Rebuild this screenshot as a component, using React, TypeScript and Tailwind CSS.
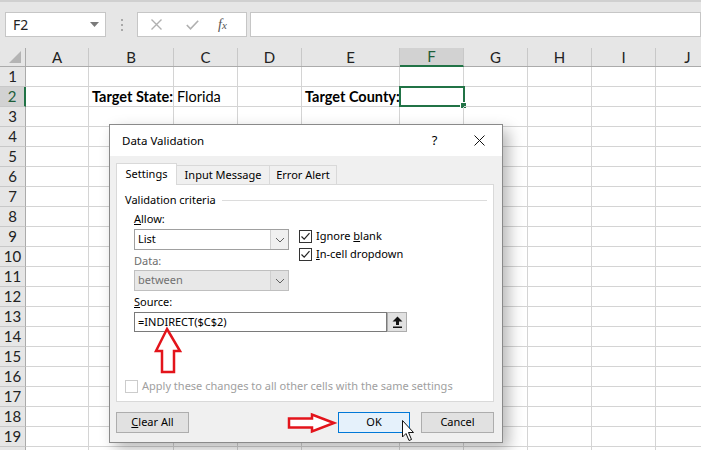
import React from "react";

const COLS = [
  { name: "A", w: 63 },
  { name: "B", w: 85 },
  { name: "C", w: 64 },
  { name: "D", w: 64 },
  { name: "E", w: 98 },
  { name: "F", w: 64 },
  { name: "G", w: 64 },
  { name: "H", w: 64 },
  { name: "I", w: 64 },
  { name: "J", w: 64 },
];

const ROWS = Array.from({ length: 20 }, (_, i) => i + 1);

const cellText: Record<string, { text: string; bold?: boolean }> = {
  "B2": { text: "Target State:", bold: true },
  "C2": { text: "Florida" },
  "E2": { text: "Target County:", bold: true },
};

const Chevron = () => (
  <svg width="10" height="6" viewBox="0 0 10 6">
    <path d="M1 1 L5 5 L9 1" fill="none" stroke="#606060" strokeWidth="1" />
  </svg>
);

const Check = ({ checked, disabled }: { checked?: boolean; disabled?: boolean }) => (
  <div
    className={`w-[13px] h-[13px] border bg-white flex items-center justify-center ${
      disabled ? "border-[#cccccc]" : "border-[#333333]"
    }`}
  >
    {checked && (
      <svg width="11" height="11" viewBox="0 0 11 11">
        <path d="M1.5 5.5 L4.2 8.2 L9.5 2.2" fill="none" stroke="#222" strokeWidth="1.2" />
      </svg>
    )}
  </div>
);

const TopBar = () => (
  <div className="h-[48px] bg-[#e6e6e6] border-t-[2px] border-[#d0d0d0] flex items-start pt-[10px] pl-[5px]">
    <div className="w-[101px] h-[25px] bg-white border border-[#c6c6c6] flex items-center pl-[7px] pr-[6px] text-[14px] text-[#222]">
      <span style={{ fontFamily: "'Noto Sans', sans-serif" }}>F2</span>
      <svg className="ml-auto" width="9" height="5" viewBox="0 0 9 5">
        <path d="M0 0 L9 0 L4.5 5 Z" fill="#7a7a7a" />
      </svg>
    </div>
    <div className="w-[31px] h-[25px] flex flex-col items-center justify-center gap-[3px]">
      <div className="w-[2px] h-[2px] bg-[#a8a8a8]" />
      <div className="w-[2px] h-[2px] bg-[#a8a8a8]" />
      <div className="w-[2px] h-[2px] bg-[#a8a8a8]" />
    </div>
    <div className="w-[110px] h-[25px] bg-white border border-[#c6c6c6] flex items-center">
      <svg className="ml-[13px]" width="11" height="11" viewBox="0 0 11 11">
        <path d="M0.5 0.5 L10.5 10.5 M10.5 0.5 L0.5 10.5" stroke="#b0b0b0" strokeWidth="1.4" />
      </svg>
      <svg className="ml-[24px]" width="13" height="10" viewBox="0 0 13 10">
        <path d="M0.8 5 L4.5 8.8 L12.2 0.8" fill="none" stroke="#b0b0b0" strokeWidth="1.6" />
      </svg>
      <span
        className="ml-[19px] italic text-[14px] text-[#555]"
        style={{ fontFamily: "'Liberation Serif', serif" }}
      >
        f<span className="text-[11px]">x</span>
      </span>
    </div>
    <div className="ml-[3px] flex-1 h-[25px] bg-white border border-[#c6c6c6]" />
  </div>
);

const Grid = () => (
  <div style={{ fontFamily: "Lato, sans-serif" }}>
    <div className="flex h-[19px] bg-[#e6e6e6] border-b border-[#ababab]">
      <div className="w-[26px] shrink-0 border-r border-[#ababab] relative">
        <svg className="absolute right-[4px] bottom-[3px]" width="12" height="12" viewBox="0 0 12 12">
          <path d="M12 0 L12 12 L0 12 Z" fill="#b4b4b4" />
        </svg>
      </div>
      {COLS.map((c) => (
        <div
          key={c.name}
          style={{ width: c.w }}
          className={`shrink-0 flex items-center justify-center text-[15px] border-r border-[#c8c8c8] ${
            c.name === "F"
              ? "bg-[#d2d2d2] text-[#1e5e3a] border-b-[2px] border-b-[#217346] -mb-px"
              : "text-[#222]"
          }`}
        >
          {c.name}
        </div>
      ))}
    </div>
    {ROWS.map((r) => (
      <div key={r} className="flex h-[20px]">
        <div
          className={`w-[26px] shrink-0 flex items-center justify-center text-[15px] border-b border-[#c8c8c8] ${
            r === 2
              ? "bg-[#d2d2d2] text-[#1e5e3a] border-r-[2px] border-r-[#217346]"
              : "bg-[#e6e6e6] text-[#222] border-r border-r-[#ababab]"
          }`}
        >
          {r < 20 ? r : ""}
        </div>
        {COLS.map((c) => {
          const key = c.name + r;
          const t = cellText[key];
          return (
            <div
              key={key}
              style={{ width: c.w }}
              className="shrink-0 relative border-r border-b border-[#d4d4d4] flex items-center pl-[3px] text-[14.5px] text-black whitespace-nowrap"
            >
              {t && <span className={t.bold ? "font-bold" : ""}>{t.text}</span>}
              {key === "F2" && (
                <div className="absolute -left-[1px] -top-[1px] w-[66px] h-[21px] border-[2px] border-[#217346]">
                  <div className="absolute -right-[4px] -bottom-[4px] w-[7px] h-[7px] bg-[#217346] border border-white" />
                </div>
              )}
            </div>
          );
        })}
      </div>
    ))}
  </div>
);

const Btn = ({
  children,
  w,
  primary,
}: {
  children: React.ReactNode;
  w: number;
  primary?: boolean;
}) => (
  <div
    style={{ width: w }}
    className={`h-[21px] flex items-center justify-center border ${
      primary ? "bg-[#e5f1fb] border-[#0078d7]" : "bg-[#e1e1e1] border-[#adadad]"
    }`}
  >
    {children}
  </div>
);

const Dialog = () => (
  <div
    className="absolute left-[109px] top-[124px] w-[394px] h-[319px] border border-[#8a8a8a] bg-[#f0f0f0] shadow-[6px_6px_14px_rgba(0,0,0,0.28)] text-[11px] text-black"
    style={{ fontFamily: "'Noto Sans', sans-serif" }}
  >
    <div className="h-[31px] bg-white flex items-center pl-[12px] text-[11.5px]">
      <span>Data Validation</span>
      <div className="ml-auto flex h-full">
        <div className="w-[45px] flex items-center justify-center text-[13px]">?</div>
        <div className="w-[45px] flex items-center justify-center">
          <svg width="11" height="11" viewBox="0 0 11 11">
            <path d="M0.5 0.5 L10.5 10.5 M10.5 0.5 L0.5 10.5" stroke="#111" strokeWidth="1" />
          </svg>
        </div>
      </div>
    </div>
    <div className="px-[6px] pt-[7px]">
      <div className="flex items-end h-[22px] relative z-10">
        <div className="w-[61px] h-[22px] bg-white border border-b-0 border-[#d9d9d9] flex items-center justify-center">
          Settings
        </div>
        <div className="w-[93px] h-[20px] border border-l-0 border-b-0 border-[#d9d9d9] flex items-center justify-center">
          Input Message
        </div>
        <div className="w-[67px] h-[20px] border border-l-0 border-b-0 border-[#d9d9d9] flex items-center justify-center">
          Error Alert
        </div>
      </div>
      <div className="w-[378px] h-[218px] -mt-px bg-white border border-[#d9d9d9] pl-[8px] pt-[7px]">
        <div className="flex items-center h-[16px]">
          <span>Validation criteria</span>
          <div className="flex-1 h-px bg-[#dcdcdc] ml-[6px] mr-[6px]" />
        </div>
        <div className="pl-[9px]">
          <div className="flex">
            <div className="w-[155px]">
              <div className="mt-[3px] h-[16px] leading-[16px]">
                <u>A</u>llow:
              </div>
              <div className="mt-[2px] h-[21px] border border-[#a0a0a0] bg-white flex">
                <div className="flex-1 pl-[3px] flex items-center">List</div>
                <div className="w-[18px] bg-[#f0f0f0] border-l border-[#d0d0d0] flex items-center justify-center">
                  <Chevron />
                </div>
              </div>
              <div className="mt-[3px] h-[16px] leading-[16px] text-[#6d6d6d]">Data:</div>
              <div className="mt-[1px] h-[21px] border border-[#bfbfbf] bg-[#e8e8e8] flex text-[#707070]">
                <div className="flex-1 pl-[3px] flex items-center">between</div>
                <div className="w-[18px] bg-[#e1e1e1] border-l border-[#cfcfcf] flex items-center justify-center">
                  <Chevron />
                </div>
              </div>
            </div>
            <div className="ml-[10px] pt-[19px]">
              <div className="flex items-center h-[18px] gap-[4px]">
                <Check checked />
                <span>
                  Ignore <u>b</u>lank
                </span>
              </div>
              <div className="flex items-center h-[18px] gap-[4px]">
                <Check checked />
                <span>
                  <u>I</u>n-cell dropdown
                </span>
              </div>
            </div>
          </div>
          <div className="mt-[3px] h-[16px] leading-[16px]">
            <u>S</u>ource:
          </div>
          <div className="mt-[2px] w-[273px] h-[20px] flex">
            <div className="flex-1 border border-[#7a7a7a] bg-white pl-[3px] flex items-center">
              =INDIRECT($C$2)
            </div>
            <div className="w-[20px] border border-[#adadad] bg-[#e1e1e1] flex items-center justify-center">
              <svg width="11" height="12" viewBox="0 0 11 12">
                <path d="M5.5 0.5 L10.5 5.5 L7 5.5 L7 9 L4 9 L4 5.5 L0.5 5.5 Z" fill="#111" />
                <rect x="1" y="10.5" width="9" height="1.5" fill="#111" />
              </svg>
            </div>
          </div>
        </div>
        <div className="mt-[46px] flex items-center gap-[4px] text-[#a0a0a0] whitespace-nowrap">
          <Check disabled />
          <span>Apply these changes to all other cells with the same settings</span>
        </div>
      </div>
      <div className="w-[378px] mt-[10px] flex">
        <Btn w={73}>
          <span>
            <u>C</u>lear All
          </span>
        </Btn>
        <div className="ml-auto flex gap-[11px]">
          <Btn w={72} primary>
            OK
          </Btn>
          <Btn w={73}>Cancel</Btn>
        </div>
      </div>
    </div>
  </div>
);

const Overlays = () => (
  <svg className="absolute left-0 top-0 pointer-events-none" width="701" height="450">
    <path
      d="M167 329 L180 351 L174 351 L174 372 L162 372 L162 351 L156 351 Z"
      fill="white"
      stroke="#e3141b"
      strokeWidth="2.5"
      strokeLinejoin="miter"
    />
    <path
      d="M334 423 L312 414.5 L312 418.5 L289 418.5 L289 427.5 L312 427.5 L312 431.5 Z"
      fill="white"
      stroke="#e3141b"
      strokeWidth="2.5"
    />
    <path
      d="M402.5 420.5 L402.5 437 L406 433.5 L409 440.5 L411.5 439.5 L408.5 432.5 L413.5 432.5 Z"
      fill="white"
      stroke="#111"
      strokeWidth="1"
      strokeLinejoin="round"
    />
  </svg>
);

export default function App() {
  return (
    <div className="w-[701px] h-[450px] overflow-hidden relative bg-white">
      <TopBar />
      <Grid />
      <Dialog />
      <Overlays />
    </div>
  );
}
